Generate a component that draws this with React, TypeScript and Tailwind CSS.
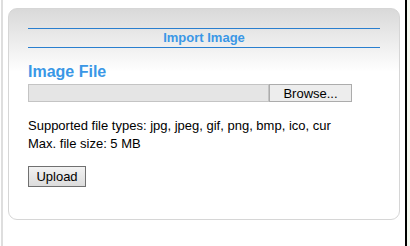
export default function App() {
  return (
    <div className="flex w-[410px] h-[246px] bg-white font-['Liberation_Sans',Arial,sans-serif] overflow-hidden">
      {/* left neighbour edge */}
      <div className="ml-px w-[2px] h-full bg-[#dedede]" />

      {/* import panel */}
      <div className="ml-[5px] mt-[8px] w-[392px] h-[212px] rounded-[9px] border border-[#d6d6d6] bg-gradient-to-b from-[#d9d9d9] via-white via-[30%] to-white px-[19px] pt-[19px]">
        <div className="h-[20px] border-y border-[#2a7fcf] flex items-center justify-center text-[13px] font-bold text-[#3a97e6]">
          Import Image
        </div>

        <h2 className="mt-[15px] text-[16px] leading-[18px] font-bold text-[#3a97e6]">Image File</h2>

        <div className="mt-[3px] flex h-[18px]">
          <div className="w-[241px] bg-[#e5e5e5] border border-[#c4c4c4]" />
          <button className="w-[83px] bg-[#ededed] border border-[#acacac] text-[13px] text-black leading-none">
            Browse...
          </button>
        </div>

        <div className="mt-[15px] text-[13px] leading-[18px] text-black">
          <p>Supported file types: jpg, jpeg, gif, png, bmp, ico, cur</p>
          <p>Max. file size: 5 MB</p>
        </div>

        <button className="mt-[13px] w-[58px] h-[21px] border border-[#707070] bg-gradient-to-b from-[#f2f2f2] to-[#dcdcdc] text-[13px] text-black leading-none">
          Upload
        </button>
      </div>

      {/* right neighbour */}
      <div className="ml-[5px] flex-1 h-full border-l-2 border-black bg-[#f3f8ef]" />
    </div>
  );
}
